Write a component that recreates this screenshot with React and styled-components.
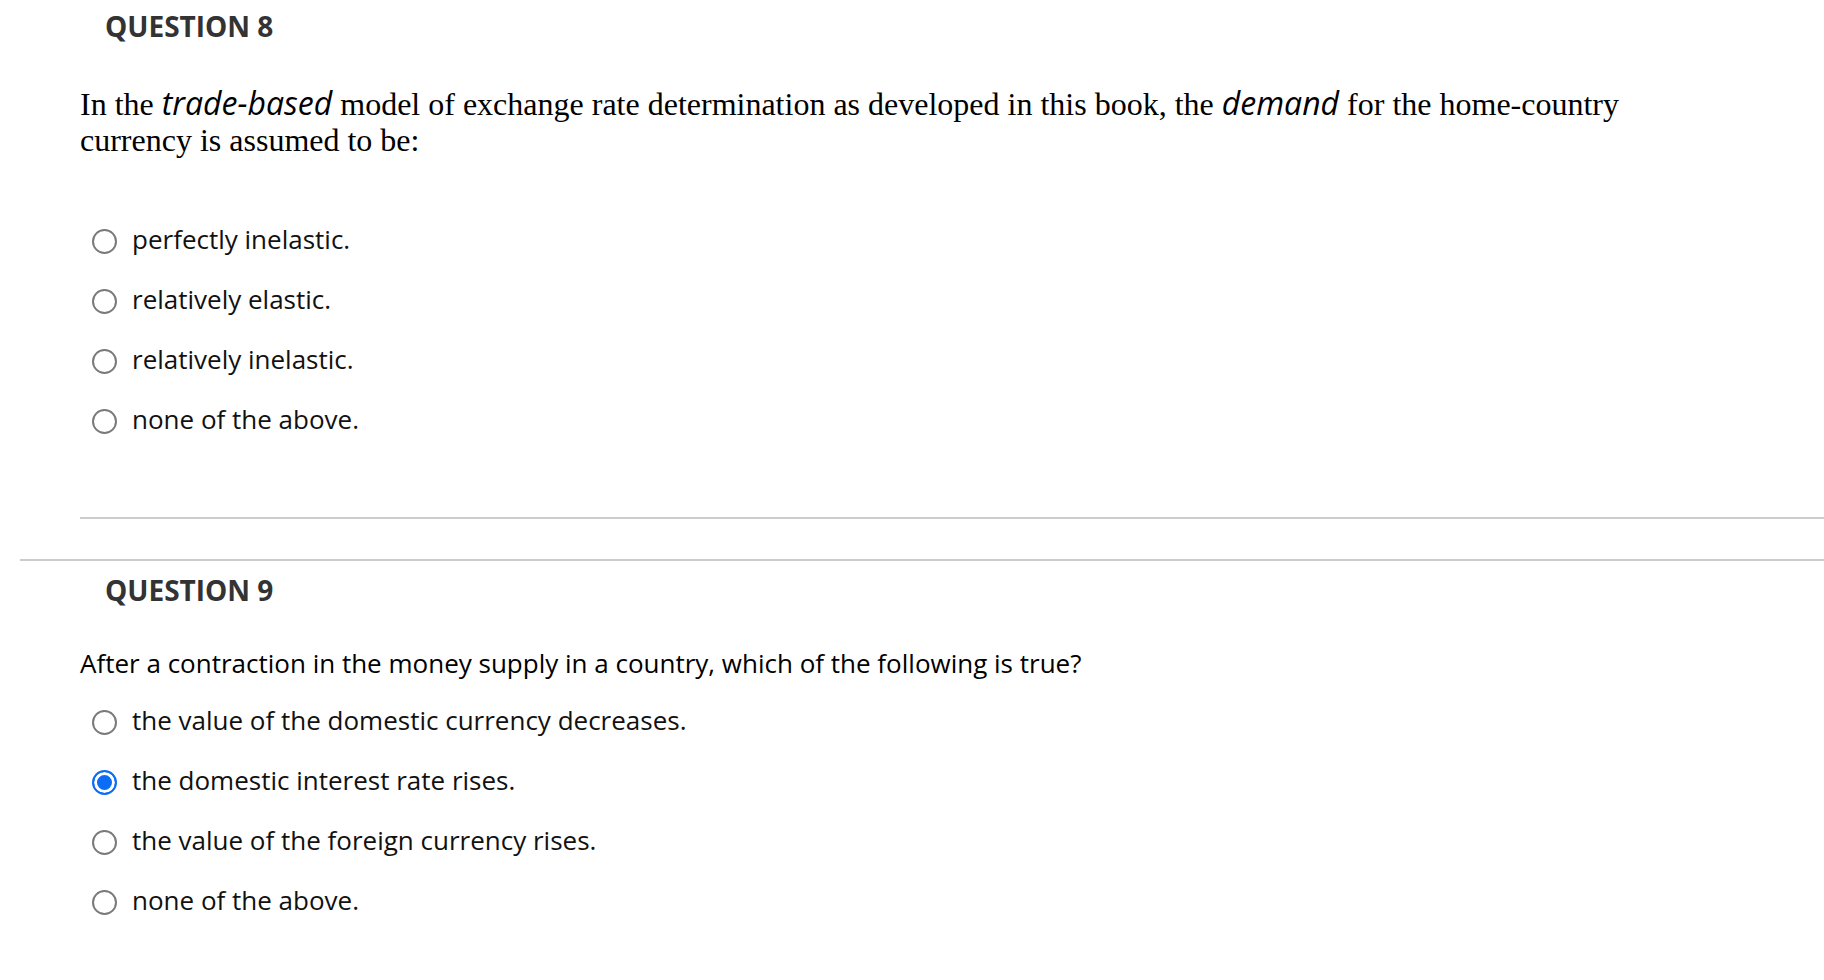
import styled, { createGlobalStyle } from "styled-components";

const GlobalStyle = createGlobalStyle`
  body {
    margin: 0;
    background: #fff;
    font-family: "Open Sans", sans-serif;
  }
`;

const Page = styled.div`
  width: 100%;
  min-height: 980px;
`;

const Section = styled.div`
  margin-left: 20px;
  padding-left: 60px;
  border-bottom: ${(p) => (p.$last ? "none" : "2px solid #cccccc")};
  padding-bottom: ${(p) => (p.$last ? "0" : "40px")};
  margin-top: ${(p) => (p.$last ? "3px" : "0")};
`;

const Heading = styled.h3`
  margin: 0;
  padding: 7px 0 0 25px;
  font-family: "Open Sans", sans-serif;
  font-weight: 700;
  font-size: 28px;
  line-height: 38px;
  color: #333;
`;

const Body = styled.div`
  border-bottom: ${(p) => (p.$last ? "none" : "2px solid #cccccc")};
  padding-bottom: ${(p) => (p.$last ? "0" : "68px")};
`;

const Prompt = styled.p`
  margin: ${(p) => (p.$serif ? "41px 0 0" : "36px 0 0")};
  font-family: ${(p) => (p.$serif ? '"Liberation Serif", serif' : '"Open Sans", sans-serif')};
  font-size: ${(p) => (p.$serif ? "32px" : "26px")};
  line-height: 36px;
  color: #000;
  max-width: 1600px;
`;

const Em = styled.em`
  font-family: "Open Sans", sans-serif;
  font-style: italic;
  font-size: 32px;
  line-height: 1;
`;

const Options = styled.div`
  display: flex;
  flex-direction: column;
  margin-top: ${(p) => (p.$serif ? "51px" : "9px")};
`;

const Option = styled.label`
  display: flex;
  align-items: center;
  height: 60px;
  padding-left: 12px;
  gap: 15px;
`;

const Radio = styled.span`
  box-sizing: border-box;
  width: 25px;
  height: 25px;
  border-radius: 50%;
  margin-top: 5px;
  border: 2px solid ${(p) => (p.$checked ? "#0b6cf6" : "#7a7a7a")};
  background: ${(p) => (p.$checked ? "#0b6cf6" : "#fff")};
  box-shadow: ${(p) => (p.$checked ? "inset 0 0 0 3px #fff" : "none")};
  flex-shrink: 0;
`;

const OptionText = styled.span`
  font-family: "Open Sans", sans-serif;
  font-size: 26px;
  color: #111;
`;

const App = () => {
  const questions = [
    {
      number: 8,
      serif: true,
      prompt: (
        <>
          In the <Em>trade-based</Em> model of exchange rate determination as developed in this book, the{" "}
          <Em>demand</Em> for the home-country currency is assumed to be:
        </>
      ),
      options: ["perfectly inelastic.", "relatively elastic.", "relatively inelastic.", "none of the above."],
      selected: -1,
    },
    {
      number: 9,
      serif: false,
      prompt: "After a contraction in the money supply in a country, which of the following is true?",
      options: [
        "the value of the domestic currency decreases.",
        "the domestic interest rate rises.",
        "the value of the foreign currency rises.",
        "none of the above.",
      ],
      selected: 1,
    },
  ];

  return (
    <>
      <GlobalStyle />
      <Page>
        {questions.map((q, qi) => (
          <Section key={q.number} $last={qi === questions.length - 1}>
            <Heading>QUESTION {q.number}</Heading>
            <Body $last={qi === questions.length - 1}>
              <Prompt $serif={q.serif}>{q.prompt}</Prompt>
              <Options $serif={q.serif}>
                {q.options.map((opt, i) => (
                  <Option key={opt}>
                    <Radio $checked={q.selected === i} />
                    <OptionText>{opt}</OptionText>
                  </Option>
                ))}
              </Options>
            </Body>
          </Section>
        ))}
      </Page>
    </>
  );
};

export default App;
